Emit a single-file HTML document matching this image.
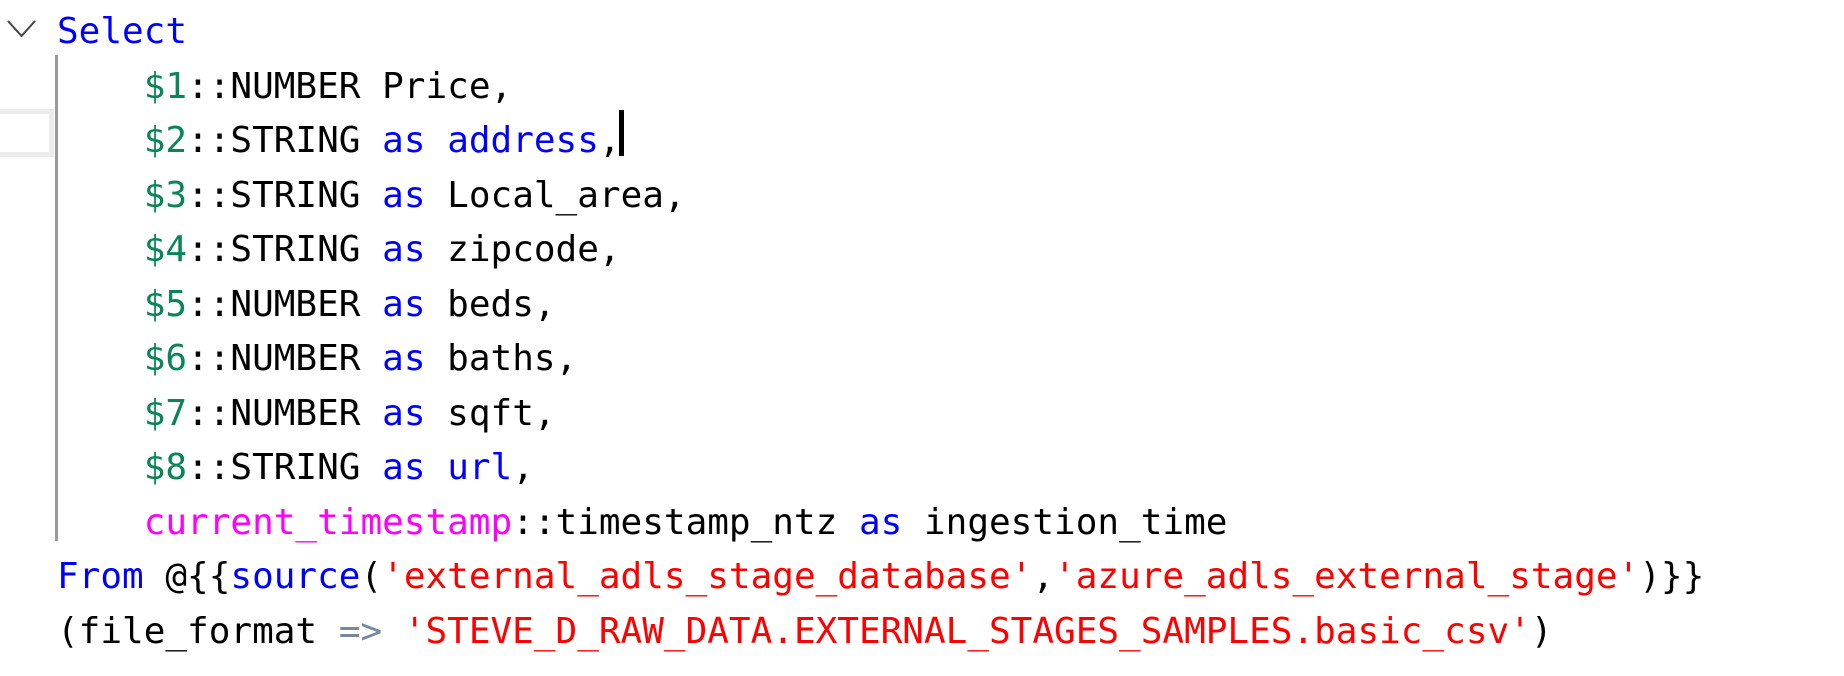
<!DOCTYPE html>
<html><head><meta charset="utf-8"><style>
html,body{margin:0;padding:0;background:#fff;width:1844px;height:676px;overflow:hidden;}
.code{position:absolute;left:57px;top:5px;font-family:"DejaVu Sans Mono","Liberation Mono",monospace;font-size:36px;line-height:54.5px;white-space:pre;color:#000;}
.k{color:#0000ff}.n{color:#098658}.f{color:#ff00ff}.s{color:#ff0000}.o{color:#778899}
.bar{position:absolute;left:55px;top:55px;width:3px;height:486px;background:#9a9a9a;}
.box{position:absolute;left:-6px;top:109px;width:50px;height:38px;border:5px solid #ececec;background:#fff;}
.cur{position:absolute;left:619px;top:110px;width:5px;height:46px;background:#000;}
</style></head><body>
<svg style="position:absolute;left:0;top:0" width="50" height="50"><path d="M8 21 L21.5 36 L35 21" fill="none" stroke="#444" stroke-width="2"/></svg>
<div class="box"></div>
<div class="bar"></div>
<div class="code"><span class="k">Select</span>
    <span class="n">$1</span>::NUMBER Price,
    <span class="n">$2</span>::STRING <span class="k">as</span> <span class="k">address</span>,
    <span class="n">$3</span>::STRING <span class="k">as</span> Local_area,
    <span class="n">$4</span>::STRING <span class="k">as</span> zipcode,
    <span class="n">$5</span>::NUMBER <span class="k">as</span> beds,
    <span class="n">$6</span>::NUMBER <span class="k">as</span> baths,
    <span class="n">$7</span>::NUMBER <span class="k">as</span> sqft,
    <span class="n">$8</span>::STRING <span class="k">as</span> <span class="k">url</span>,
    <span class="f">current_timestamp</span>::timestamp_ntz <span class="k">as</span> ingestion_time
<span class="k">From</span> @{{<span class="k">source</span>(<span class="s">'external_adls_stage_database'</span>,<span class="s">'azure_adls_external_stage'</span>)}}
(file_format <span class="o">=&gt;</span> <span class="s">'STEVE_D_RAW_DATA.EXTERNAL_STAGES_SAMPLES.basic_csv'</span>)</div>
<div class="cur"></div>
</body></html>
